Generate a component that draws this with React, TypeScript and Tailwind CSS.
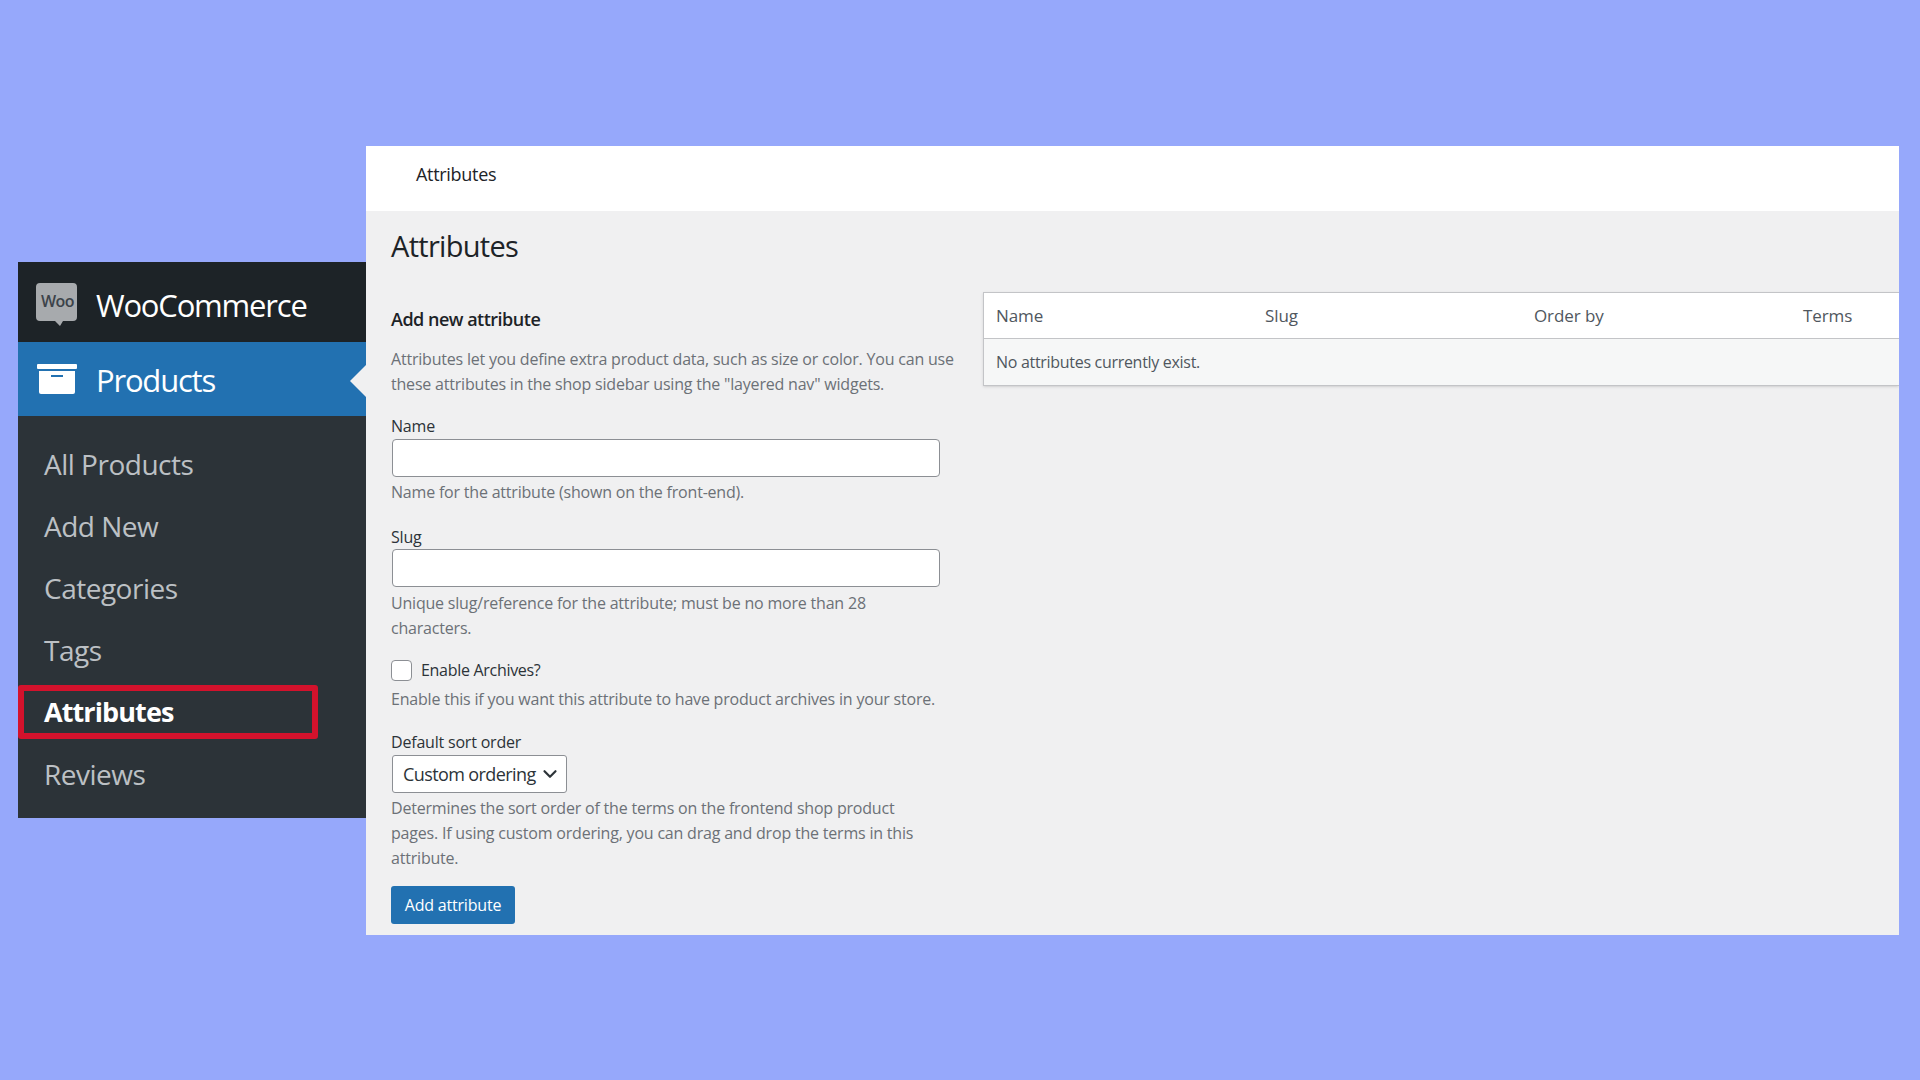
import React from 'react';
import { ChevronDown } from 'lucide-react';

const SUBMENU = ['All Products', 'Add New', 'Categories', 'Tags', 'Attributes', 'Reviews'];
const COLUMNS = ['Name', 'Slug', 'Order by', 'Terms'];

const Sidebar = () => (
  <aside className="w-[348px] mt-[116px] shrink-0 bg-[#2c3338] h-[556px] flex flex-col">
    <div className="h-[80px] bg-[#1d2327] flex items-center pl-[17px] gap-[18px] text-white">
      <div className="relative w-[43px] h-[46px] mt-[6px] shrink-0">
        <svg width="43" height="46" viewBox="0 0 43 46" className="block">
          <path d="M5 1h33a4 4 0 0 1 4 4v30a4 4 0 0 1-4 4H28l-3 5-5-5H5a4 4 0 0 1-4-4V5a4 4 0 0 1 4-4z" fill="#a7aaad" />
        </svg>
        <span className="absolute left-[6px] top-[10px] text-[16px] leading-[18px] font-semibold tracking-[-0.6px] text-[#3c434a]">Woo</span>
      </div>
      <span className="text-[31px] leading-none tracking-[-1.2px] pt-[6px]">WooCommerce</span>
    </div>
    <div className="relative h-[74px] bg-[#2271b1] flex items-center pl-[19px] gap-[19px] text-white">
      <svg width="40" height="30" viewBox="0 0 40 30" className="shrink-0">
        <rect x="0" y="0" width="40" height="5" rx="1" fill="#fff" />
        <path d="M2 7h36v21a2 2 0 0 1-2 2H4a2 2 0 0 1-2-2z" fill="#fff" />
        <rect x="14" y="11" width="12" height="2" fill="#2271b1" />
      </svg>
      <span className="text-[31px] leading-none tracking-[-1.2px] pt-[3px]">Products</span>
      <div className="absolute right-0 top-[23px] w-0 h-0 border-y-[16px] border-y-transparent border-r-[16px] border-r-[#f0f0f1]" />
    </div>
    <ul className="flex flex-col pt-[17px]">
      {SUBMENU.map((item) =>
        item === 'Attributes' ? (
          <li key={item} className="h-[54px] w-[300px] my-[4px] flex items-center pl-[20px] border-[6px] border-[#d3122c] rounded-[3px] text-[27px] tracking-[-0.9px] font-bold text-white">
            {item}
          </li>
        ) : (
          <li key={item} className="h-[62px] flex items-center pl-[26px] text-[28px] tracking-[-0.5px] text-[#bcc0c4]">
            {item}
          </li>
        )
      )}
    </ul>
  </aside>
);

const Help = ({ children }: { children: React.ReactNode }) => (
  <p className="text-[16px] leading-[25px] tracking-[-0.2px] text-[#6c7177]">{children}</p>
);

const Label = ({ children }: { children: React.ReactNode }) => (
  <label className="block text-[16px] leading-[22px] tracking-[-0.2px] text-[#2c3338]">{children}</label>
);

const TextField = () => (
  <input type="text" className="block w-[548px] h-[38px] ml-[1px] bg-white border border-[#8c8f94] rounded-[4px]" />
);

const AttributeForm = () => (
  <form className="w-[572px] shrink-0 pt-[15px]">
    <h2 className="text-[18px] leading-[24px] font-semibold tracking-[-0.5px] text-[#1d2327]">Add new attribute</h2>
    <div className="mt-[16px]">
      <Help>Attributes let you define extra product data, such as size or color. You can use these attributes in the shop sidebar using the "layered nav" widgets.</Help>
    </div>
    <div className="mt-[18px]">
      <Label>Name</Label>
      <div className="mt-[2px]"><TextField /></div>
      <div className="mt-[3px]"><Help>Name for the attribute (shown on the front-end).</Help></div>
    </div>
    <div className="mt-[21px]">
      <Label>Slug</Label>
      <div className="mt-[1px]"><TextField /></div>
      <div className="mt-[4px] w-[540px]"><Help>Unique slug/reference for the attribute; must be no more than 28 characters.</Help></div>
    </div>
    <div className="mt-[18px] flex items-center gap-[9px] h-[22px]">
      <input type="checkbox" className="appearance-none block w-[21px] h-[21px] bg-white border border-[#8c8f94] rounded-[4px]" />
      <span className="text-[16px] tracking-[-0.3px] text-[#2c3338]">Enable Archives?</span>
    </div>
    <div className="mt-[6px]"><Help>Enable this if you want this attribute to have product archives in your store.</Help></div>
    <div className="mt-[19px]">
      <Label>Default sort order</Label>
      <div className="relative w-[175px] h-[38px] ml-[1px] mt-[2px]">
        <select className="appearance-none block w-full h-full pl-[10px] bg-white border border-[#8c8f94] rounded-[3px] text-[18px] tracking-[-0.6px] text-[#2c3338]">
          <option>Custom ordering</option>
        </select>
        <ChevronDown className="absolute right-[6px] top-[8px] w-[22px] h-[22px] text-[#2c3338] pointer-events-none" strokeWidth={2.4} />
      </div>
      <div className="mt-[3px] w-[540px]"><Help>Determines the sort order of the terms on the frontend shop product pages. If using custom ordering, you can drag and drop the terms in this attribute.</Help></div>
    </div>
    <button type="button" className="mt-[15px] block w-[124px] h-[38px] bg-[#2271b1] rounded-[3px] text-[16px] tracking-[-0.2px] text-white">
      Add attribute
    </button>
  </form>
);

const AttributeTable = () => (
  <div className="flex-1 border-y border-l border-[#c3c4c7] text-[#50575e] shadow-sm">
    <div className="h-[46px] bg-white border-b border-[#c3c4c7] grid grid-cols-[269px_269px_269px_1fr] items-center pl-[12px] text-[17px] tracking-[-0.1px]">
      {COLUMNS.map((col) => (
        <span key={col}>{col}</span>
      ))}
    </div>
    <div className="h-[46px] bg-[#f6f7f7] flex items-center pl-[12px] text-[16px] tracking-[-0.3px]">No attributes currently exist.</div>
  </div>
);

export default function App() {
  return (
    <div className="w-[1920px] h-[1080px] bg-[#96a8fb] flex items-start pl-[18px] pt-[146px] overflow-hidden" style={{ fontFamily: '"Open Sans", sans-serif' }}>
      <Sidebar />
      <main className="w-[1533px] h-[789px] bg-[#f0f0f1] overflow-hidden flex flex-col">
        <div className="h-[65px] bg-white shrink-0 flex items-center pl-[50px] pb-[9px] text-[18px] font-medium tracking-[-0.3px] text-[#1d2327]">Attributes</div>
        <div className="pl-[25px] flex-1">
          <h1 className="mt-[17px] text-[29px] leading-[36px] tracking-[-0.7px] text-[#1d2327]">Attributes</h1>
          <div className="mt-[28px] flex items-start gap-[20px]">
            <AttributeForm />
            <AttributeTable />
          </div>
        </div>
      </main>
    </div>
  );
}
